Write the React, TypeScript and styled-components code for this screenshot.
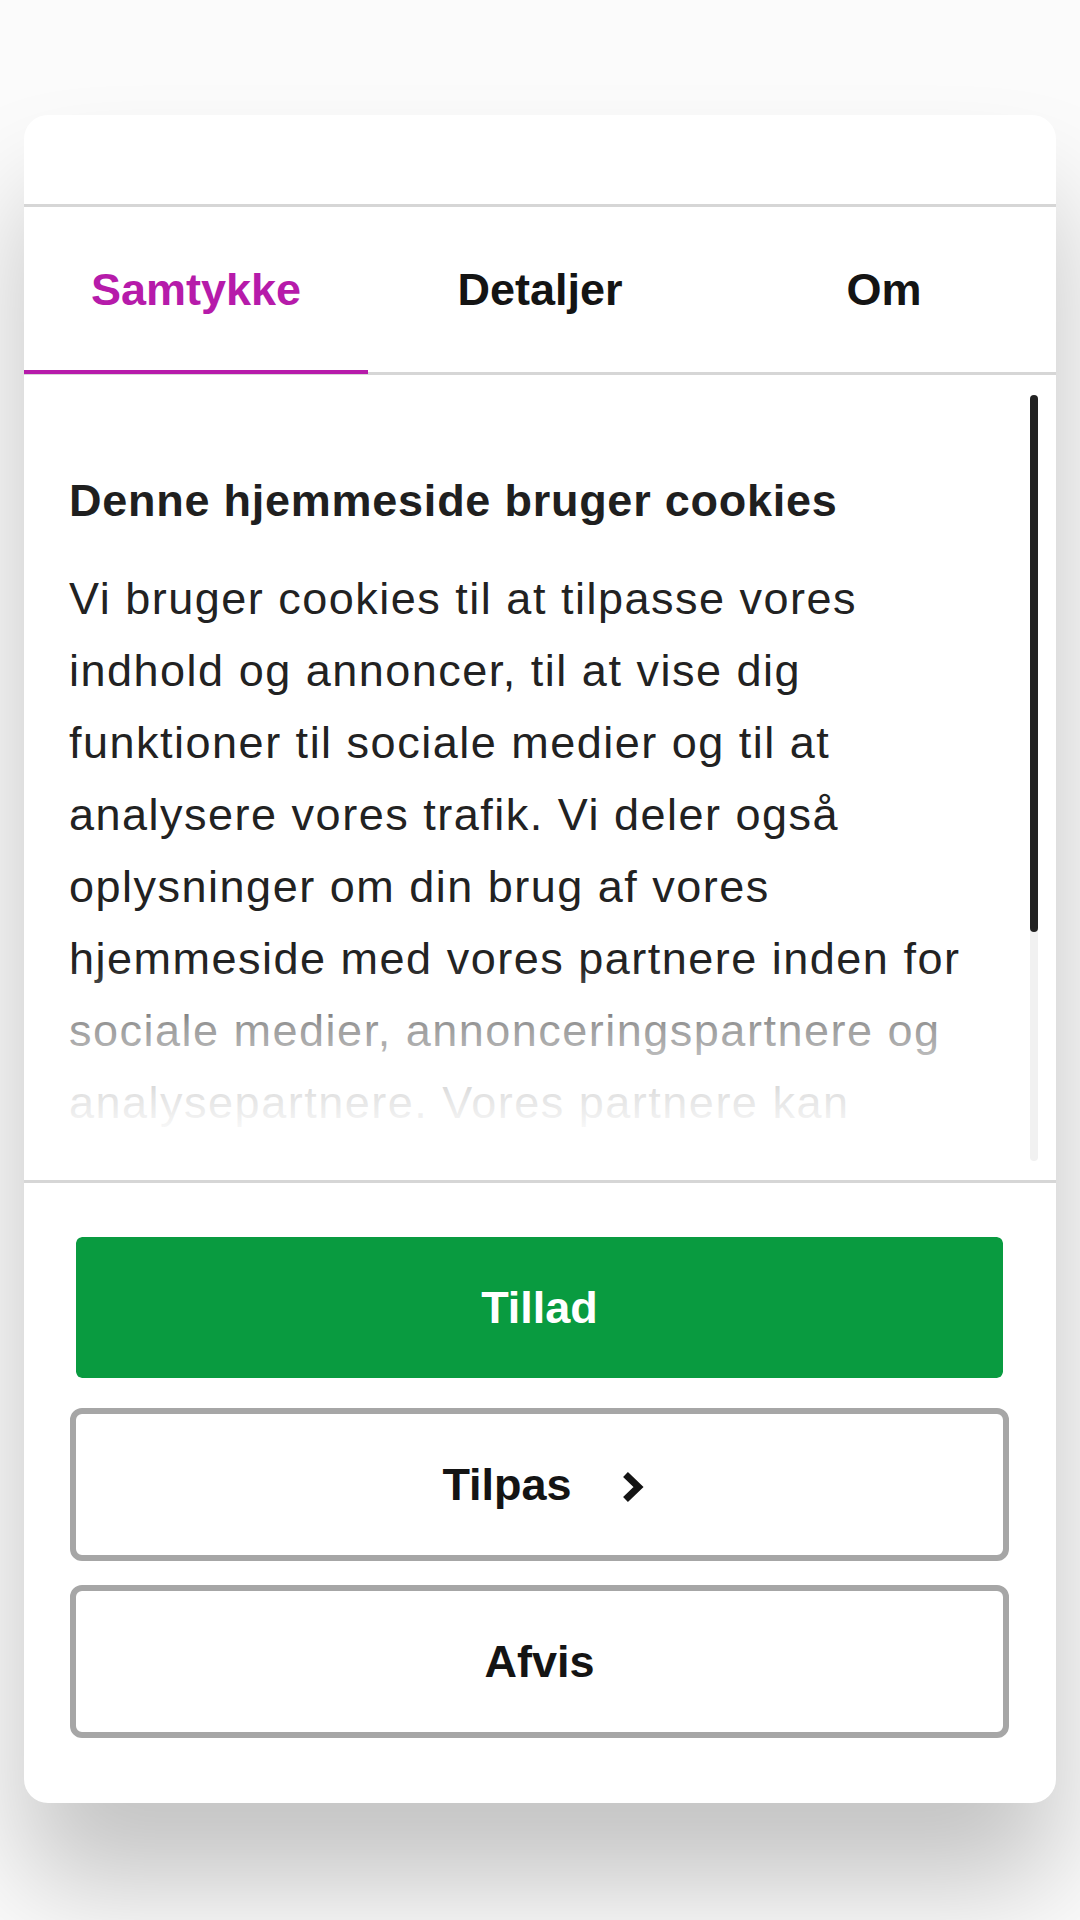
import React from "react"
import styled, { createGlobalStyle } from "styled-components"

const GlobalStyle = createGlobalStyle`
  html, body {
    margin: 0;
    padding: 0;
    background: #fbfbfb;
  }
  body {
    font-family: "Liberation Sans", Arial, Helvetica, sans-serif;
    color: #141414;
  }
  * { box-sizing: border-box; }
`

const tabs = ["Samtykke", "Detaljer", "Om"]

const App = () => {
    return (
        <>
            <GlobalStyle />
            <Page>
                <Dialog>
                    <Header />
                    <TabList>
                        {tabs.map((t, i) => (
                            <Tab key={t} $active={i === 0}>{t}</Tab>
                        ))}
                    </TabList>
                    <Body>
                        <Scroller>
                            <Title>Denne hjemmeside bruger cookies</Title>
                            <Text>
                                Vi bruger cookies til at tilpasse vores indhold og annoncer, til at vise dig
                                funktioner til sociale medier og til at analysere vores trafik. Vi deler også
                                oplysninger om din brug af vores hjemmeside med vores partnere inden for
                                sociale medier, annonceringspartnere og analysepartnere. Vores partnere kan
                                kombinere disse data med andre oplysninger, du har givet dem, eller som de har
                                indsamlet fra din brug af deres tjenester.
                            </Text>
                        </Scroller>
                        <Fade />
                        <Track>
                            <Thumb />
                        </Track>
                    </Body>
                    <Footer>
                        <Button $primary>Tillad</Button>
                        <Button $offset>
                            Tilpas
                            <Chevron width="22" height="32" viewBox="0 0 22 32">
                                <path d="M3.5 3.5 L16.5 16 L3.5 28.5" />
                            </Chevron>
                        </Button>
                        <Button>Afvis</Button>
                    </Footer>
                </Dialog>
            </Page>
        </>
    )
}

export default App

const Page = styled.div`
    width: 1080px;
    height: 1920px;
    padding: 115px 24px 0;
    overflow: hidden;
`

const Dialog = styled.div`
    width: 1032px;
    background: #fff;
    border-radius: 24px;
    box-shadow: 0 80px 110px rgba(0, 0, 0, 0.22);
    overflow: hidden;
`

const Header = styled.div`
    height: 92px;
    border-bottom: 3px solid #d6d6d6;
`

const TabList = styled.div`
    display: grid;
    grid-template-columns: repeat(3, 1fr);
    border-bottom: 3px solid #d6d6d6;
`

const Tab = styled.div<{ $active?: boolean }>`
    position: relative;
    height: 165px;
    display: flex;
    align-items: center;
    justify-content: center;
    font-size: 45px;
    font-weight: bold;
    color: ${p => p.$active ? "#b61baa" : "#141414"};

    &::after {
        content: "";
        display: ${p => p.$active ? "block" : "none"};
        position: absolute;
        left: 0;
        right: 0;
        bottom: -2px;
        height: 4px;
        background: #b61baa;
    }
`

const Body = styled.div`
    position: relative;
    height: 808px;
    overflow: hidden;
    border-bottom: 3px solid #d6d6d6;
`

const Scroller = styled.div`
    padding: 90px 66px 0 45px;
    color: #222;
`

const Title = styled.h2`
    margin: 0 0 26px;
    font-size: 45px;
    line-height: 72px;
    font-weight: bold;
    letter-spacing: 0.75px;
    color: #1f1f1f;
`

const Text = styled.p`
    margin: 0;
    font-size: 45px;
    line-height: 72px;
    letter-spacing: 1.5px;
`

const Fade = styled.div`
    position: absolute;
    left: 0;
    right: 0;
    bottom: 0;
    height: 214px;
    background: linear-gradient(
        to bottom,
        rgba(255, 255, 255, 0) 0%,
        rgba(255, 255, 255, 0.55) 28%,
        rgba(255, 255, 255, 0.87) 60%,
        rgba(255, 255, 255, 0.97) 76%,
        rgba(255, 255, 255, 1) 88%
    );
`

const Track = styled.div`
    position: absolute;
    top: 20px;
    bottom: 19px;
    right: 18px;
    width: 8px;
    border-radius: 4px;
    background: #f1f1f1;
`

const Thumb = styled.div`
    height: 537px;
    border-radius: 4px;
    background: #222;
`

const Footer = styled.div`
    display: flex;
    flex-direction: column;
    gap: 24px;
    padding: 48px 47px 65px 46px;
`

const Button = styled.button<{ $primary?: boolean; $offset?: boolean }>`
    height: 153px;
    display: flex;
    align-items: center;
    justify-content: center;
    gap: 50px;
    border: 6px solid ${p => p.$primary ? "#fff" : "#a6a6a6"};
    border-radius: 12px;
    background: ${p => p.$primary ? "#099b40" : "#fff"};
    background-clip: padding-box;
    color: ${p => p.$primary ? "#fff" : "#141414"};
    font-family: "Liberation Sans", Arial, Helvetica, sans-serif;
    font-size: 45px;
    font-weight: bold;
    padding: 0 0 0 ${p => p.$offset ? "7px" : "0"};
`

const Chevron = styled.svg`
    fill: none;
    stroke: #141414;
    stroke-width: 7;
    stroke-linejoin: miter;
    margin-top: 4px;
`
